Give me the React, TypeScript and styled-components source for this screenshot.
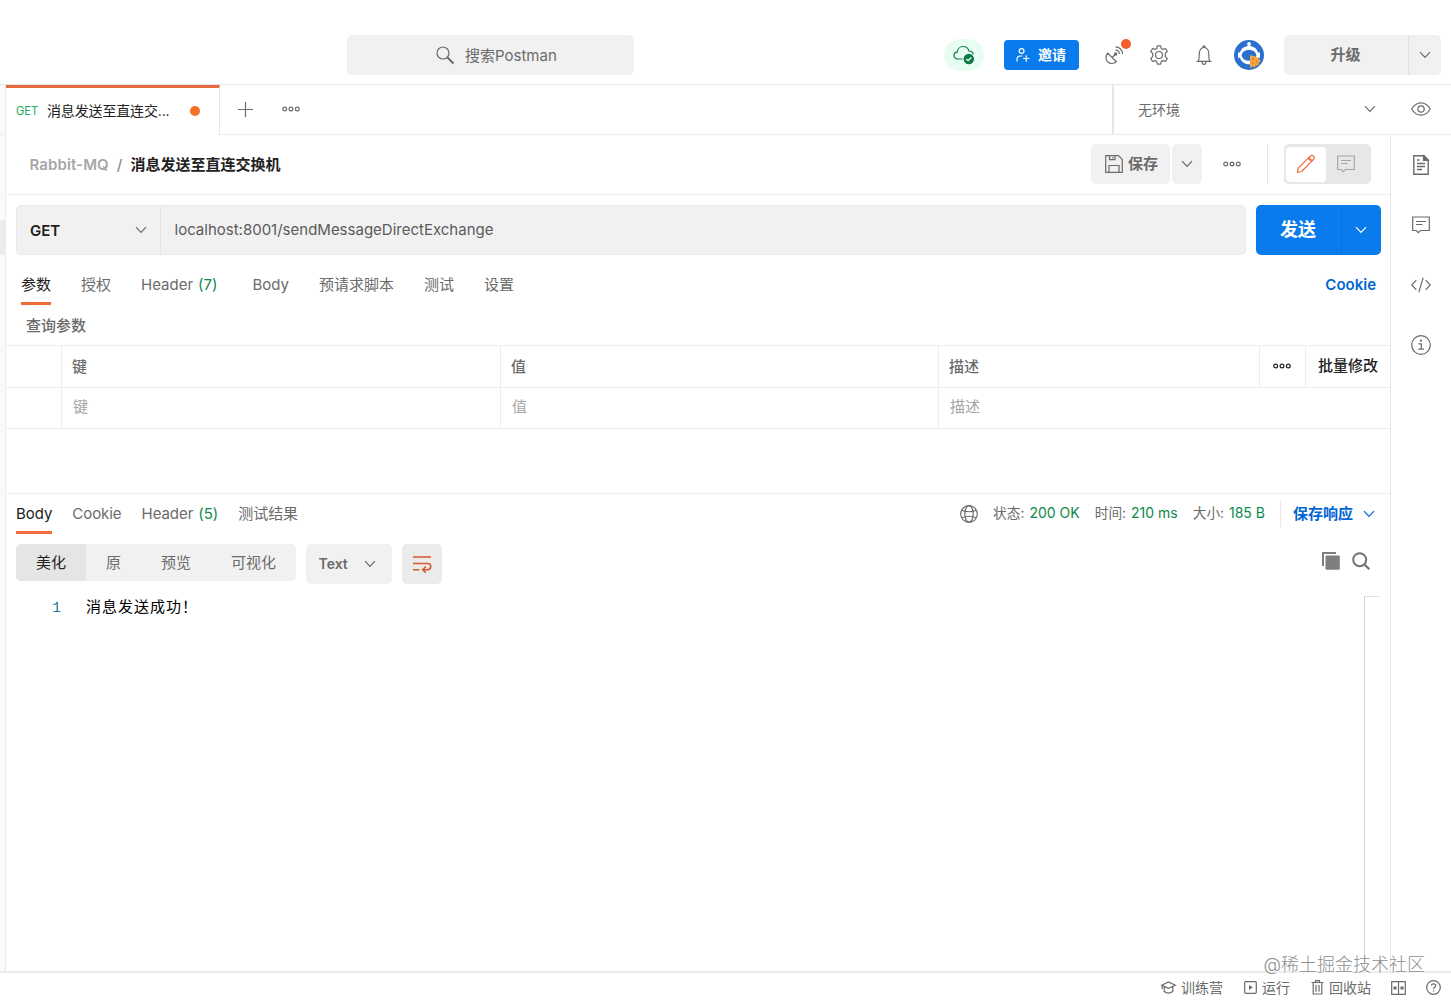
import React from "react";
import styled, { createGlobalStyle, css } from "styled-components";

const GlobalStyle = createGlobalStyle`
  * { box-sizing: border-box; }
  body {
    margin: 0;
    background: #fff;
    font-family: Inter, "Noto Sans CJK SC", sans-serif;
    font-size: 15px;
    line-height: 20px;
    color: #6b6b6b;
    overflow: hidden;
  }
`;

const line = "#ededed";
const orange = "#f26b3a";
const blue = "#097bed";
const green = "#0c8a4b";

const Page = styled.div`
  position: relative;
  width: 1451px;
  height: 1001px;
  display: flex;
  flex-direction: column;
  white-space: nowrap;
`;

const Svg = styled.svg<{ $color?: string }>`
  display: block;
  flex: none;
  fill: none;
  stroke: ${(p) => p.$color ?? "#6b6b6b"};
  stroke-width: 1.2;
  overflow: visible;
`;

/* ---------- header ---------- */
const Header = styled.header`
  flex: none;
  height: 85px;
  padding: 25px 10px 0 347px;
  display: flex;
  align-items: center;
  border-bottom: 1px solid #e6e6e6;
`;
const Search = styled.div`
  width: 287px;
  height: 40px;
  padding: 2px 0 0 89px;
  display: flex;
  align-items: center;
  gap: 10px;
  border-radius: 5px;
  background: #f1f1f1;
`;
const HeaderTools = styled.div`
  margin-left: auto;
  display: flex;
  align-items: center;
`;
const CloudPill = styled.div`
  width: 40px;
  height: 32px;
  margin-right: 20px;
  border-radius: 16px;
  background: #e8fdf1;
  display: grid;
  place-items: center;
`;
const Invite = styled.button`
  width: 75px;
  height: 30px;
  margin-right: 25px;
  padding: 0 0 0 12px;
  border: 0;
  border-radius: 4px;
  display: flex;
  align-items: center;
  gap: 8px;
  background: ${blue};
  color: #fff;
  font: 700 14px/20px Inter, "Noto Sans CJK SC", sans-serif;
`;
const Tool = styled.div<{ $gap: number }>`
  position: relative;
  width: 20px;
  height: 20px;
  margin-right: ${(p) => p.$gap}px;
  display: grid;
  place-items: center;
`;
const Notice = styled.i`
  position: absolute;
  top: -6px;
  right: -7px;
  width: 10px;
  height: 10px;
  border-radius: 50%;
  background: #f2602c;
`;
const Upgrade = styled.div`
  width: 157px;
  height: 40px;
  margin-left: 20px;
  border-radius: 5px;
  background: #f1f1f1;
  display: flex;
  font-weight: 600;
`;
const UpgradeLabel = styled.div`
  width: 125px;
  padding-right: 1px;
  display: grid;
  place-items: center;
  border-right: 1px solid #e0e0e0;
`;
const UpgradeMore = styled.div`
  flex: 1;
  display: grid;
  place-items: center;
`;

/* ---------- workspace ---------- */
const Workspace = styled.div`
  flex: 1;
  min-height: 0;
  display: flex;
`;
const Gutter = styled.div`
  width: 6px;
  border-right: 1px solid #ebebeb;
  background: #fafafa;
`;
const GutterTop = styled.div`
  height: 50px;
  border-bottom: 1px solid ${line};
`;
const GutterMark = styled.div`
  height: 35px;
  margin-top: 85px;
  background: #ececec;
`;
const Column = styled.div`
  flex: 1;
  display: flex;
  flex-direction: column;
`;
const TabBar = styled.div`
  height: 50px;
  display: flex;
`;
const RequestTab = styled.div`
  width: 214px;
  border-top: 3px solid #e5693f;
  border-right: 1px solid #e6e6e6;
  padding: 0 19px 2px 10px;
  display: flex;
  align-items: center;
  color: #212121;
  font-size: 14px;
`;
const TabMethod = styled.span`
  width: 31px;
  padding-top: 1px;
  font-size: 11.2px;
  color: #1fa963;
`;
const TabTitle = styled.span`
  letter-spacing: -0.15px;
`;
const Unsaved = styled.i`
  width: 10px;
  height: 10px;
  margin-left: auto;
  border-radius: 50%;
  background: #f47023;
`;
const TabActions = styled.div`
  flex: 1;
  padding: 0 0 1px 18px;
  display: flex;
  align-items: center;
  gap: 29px;
  border-bottom: 1px solid ${line};
`;
const Environment = styled.div`
  width: 339px;
  padding: 1px 20px 0 24px;
  display: flex;
  align-items: center;
  border-left: 2px solid #e6e6e6;
  border-bottom: 1px solid ${line};
  font-size: 14px;
`;
const EnvIcons = styled.div`
  margin-left: auto;
  padding-bottom: 3px;
  display: flex;
  align-items: center;
  gap: 35px;
`;
const Split = styled.div`
  flex: 1;
  min-height: 0;
  display: flex;
`;
const Editor = styled.main`
  width: 1384px;
  display: flex;
  flex-direction: column;
`;
const Rail = styled.aside`
  flex: 1;
  padding-top: 20px;
  border-left: 1px solid #e9e9e9;
  display: flex;
  flex-direction: column;
  align-items: center;
  gap: 40px;
`;
const RailItem = styled.div`
  width: 20px;
  height: 20px;
  display: grid;
  place-items: center;
`;

/* ---------- request title ---------- */
const TitleRow = styled.div`
  flex: none;
  height: 60px;
  padding: 0 19px 1px 23.5px;
  display: flex;
  align-items: center;
  border-bottom: 1px solid ${line};
  font-weight: 600;
`;
const Breadcrumb = styled.div`
  padding-top: 2px;
`;
const Crumb = styled.span`
  color: #a6a6a6;
  letter-spacing: 0.1px;
`;
const CrumbSlash = styled.span`
  margin: 0 8px;
  color: #8c8c8c;
  font-weight: 500;
`;
const Title = styled.span`
  color: #212121;
`;
const TitleTools = styled.div`
  margin-left: auto;
  display: flex;
  align-items: center;
`;
const SaveButton = styled.div`
  width: 79px;
  height: 40px;
  padding-left: 14px;
  display: flex;
  align-items: center;
  gap: 5px;
  border-radius: 5px;
  background: #f1f1f1;
`;
const SaveMore = styled.div`
  width: 30px;
  height: 40px;
  margin: 0 21px 0 2px;
  display: grid;
  place-items: center;
  border-radius: 5px;
  background: #f1f1f1;
`;
const VerticalRule = styled.i<{ $h: number; $l: number; $r: number }>`
  width: 1px;
  height: ${(p) => p.$h}px;
  margin: 0 ${(p) => p.$r}px 0 ${(p) => p.$l}px;
  background: #e8e8e8;
`;
const ModeSwitch = styled.div`
  width: 87px;
  height: 40px;
  padding: 3px 2px 2px;
  display: flex;
  border-radius: 5px;
  background: #e7e7e7;
`;
const Mode = styled.div<{ $on?: boolean }>`
  width: 40px;
  padding-bottom: 1px;
  display: grid;
  place-items: center;
  border-radius: 4px;
  background: ${(p) => (p.$on ? "#fff" : "transparent")};
`;

/* ---------- url row ---------- */
const UrlRow = styled.div`
  flex: none;
  height: 60px;
  padding: 10px 9px 0 10px;
  display: flex;
`;
const UrlBox = styled.div`
  width: 1230px;
  height: 50px;
  display: flex;
  border: 1px solid #e9e9e9;
  border-radius: 5px;
  background: #f1f1f1;
`;
const Method = styled.div`
  width: 144px;
  padding: 0 13px 0 13px;
  display: flex;
  align-items: center;
  justify-content: space-between;
  border-right: 1px solid #e4e4e4;
  color: #212121;
  font-size: 15px;
  font-weight: 600;
`;
const MethodName = styled.span`
  padding-top: 1px;
`;
const Url = styled.div`
  padding: 14px 0 0 13.5px;
  color: #5b5b5b;
`;
const Send = styled.div`
  width: 125px;
  height: 50px;
  margin-left: 10px;
  display: flex;
  border-radius: 5px;
  background: ${blue};
  color: #fff;
  font-size: 18px;
  font-weight: 700;
`;
const SendLabel = styled.div`
  width: 86px;
  padding-right: 1px;
  display: grid;
  place-items: center;
  border-right: 1px solid #0873df;
`;
const SendMore = styled.div`
  width: 38px;
  display: grid;
  place-items: center;
`;

/* ---------- tabs ---------- */
const RequestTabs = styled.nav`
  flex: none;
  height: 50px;
  padding: 0 14px 0 15px;
  display: flex;
  align-items: flex-start;
`;
const tabBase = css<{ $on?: boolean }>`
  padding-bottom: 7px;
  border-bottom: 3px solid ${(p) => (p.$on ? orange : "transparent")};
  color: ${(p) => (p.$on ? "#212121" : "#6b6b6b")};
`;
const RequestTabItem = styled.span<{ $on?: boolean; $gap: number }>`
  ${tabBase}
  padding-top: 20px;
  margin-right: ${(p) => p.$gap}px;
`;
const Count = styled.em`
  margin-left: 5px;
  font-style: normal;
  color: ${green};
`;
const CookieLink = styled.span`
  margin: 20px 0 0 auto;
  color: #0265d2;
  font-weight: 600;
  font-size: 15px;
`;
const SectionTitle = styled.div`
  flex: none;
  height: 40px;
  padding: 11px 0 0 20px;
  font-weight: 500;
`;

/* ---------- params table ---------- */
const Table = styled.div`
  flex: none;
  border-top: 1px solid ${line};
`;
const HeadRow = styled.div`
  height: 42px;
  display: grid;
  grid-template-columns: 56px 439px 438px 321px 46px 84px;
  border-bottom: 1px solid ${line};
  font-weight: 500;
`;
const FieldRow = styled(HeadRow)`
  height: 41px;
  grid-template-columns: 56px 439px 438px 451px;
  font-weight: 400;
  color: #a6a6a6;
`;
const Cell = styled.div<{ $pad?: number; $lift?: boolean; $last?: boolean; $dark?: boolean }>`
  padding-left: ${(p) => p.$pad ?? 0}px;
  padding-bottom: ${(p) => (p.$lift ? 2 : 0)}px;
  display: flex;
  align-items: center;
  border-right: ${(p) => (p.$last ? "0" : `1px solid ${line}`)};
  color: ${(p) => (p.$dark ? "#212121" : "inherit")};
`;

/* ---------- response ---------- */
const Response = styled.section`
  flex: 1;
  min-height: 0;
  margin-top: 64px;
  border-top: 1px solid ${line};
  display: flex;
  flex-direction: column;
`;
const ResponseHead = styled.div`
  flex: none;
  height: 50px;
  padding: 0 15px 0 10px;
  display: flex;
  align-items: flex-start;
`;
const ResponseTab = styled.span<{ $on?: boolean; $gap?: number }>`
  ${tabBase}
  padding-top: 10px;
  margin-right: ${(p) => p.$gap ?? 20}px;
  letter-spacing: -0.05px;
`;
const Stats = styled.div`
  height: 40px;
  margin-left: auto;
  display: flex;
  align-items: center;
  font-size: 13.7px;
`;
const Stat = styled.span<{ $gap: number }>`
  margin-left: ${(p) => p.$gap}px;
  padding-bottom: 2px;
`;
const StatValue = styled.b`
  margin-left: 5px;
  font-size: 14px;
  font-weight: 400;
  color: ${green};
`;
const SaveResponse = styled.span`
  margin-right: 10px;
  color: #0265d2;
  font-size: 15px;
  font-weight: 700;
`;
const Toolbar = styled.div`
  flex: none;
  height: 52px;
  padding: 0 20px 0 10px;
  display: flex;
  align-items: flex-start;
`;
const Segments = styled.div`
  width: 280px;
  height: 37px;
  display: flex;
  overflow: hidden;
  border-radius: 5px;
  background: #f1f1f1;
`;
const Segment = styled.div<{ $w: number; $on?: boolean }>`
  width: ${(p) => p.$w}px;
  display: grid;
  place-items: center;
  background: ${(p) => (p.$on ? "#e5e5e5" : "transparent")};
  color: ${(p) => (p.$on ? "#212121" : "#6b6b6b")};
`;
const Format = styled.div`
  width: 86px;
  height: 40px;
  margin: 0 10px;
  padding: 0 16px 1px 12.5px;
  display: flex;
  align-items: center;
  justify-content: space-between;
  border-radius: 5px;
  background: #f1f1f1;
  font-size: 14px;
  font-weight: 600;
`;
const Wrap = styled.div`
  width: 40px;
  height: 40px;
  display: grid;
  place-items: center;
  border-radius: 5px;
  background: #ebebeb;
`;
const ToolbarIcons = styled.div`
  margin: 8px 0 0 auto;
  display: flex;
  gap: 12px;
`;
const Code = styled.div`
  flex: 1;
  display: flex;
  line-height: 20px;
`;
const LineNumber = styled.span`
  width: 55px;
  padding-top: 2px;
  text-align: right;
  font-family: "Liberation Mono", monospace;
  font-size: 14.5px;
  color: #237893;
`;
const CodeText = styled.span`
  margin-left: 25px;
  padding-top: 1px;
  font-size: 15px;
  letter-spacing: 1px;
  color: #000;
`;
const Ruler = styled.div`
  width: 16px;
  margin: 0 10px 0 auto;
  border-top: 1px solid #e4e4e4;
  border-left: 1px solid #d0d0d0;
`;

/* ---------- footer ---------- */
const Footer = styled.footer`
  flex: none;
  height: 30px;
  padding: 1px 10px 0 0;
  display: flex;
  align-items: center;
  justify-content: flex-end;
  border-top: 2px solid #ececec;
  font-size: 14px;
`;
const FooterItem = styled.span<{ $gap?: number }>`
  margin-right: ${(p) => p.$gap ?? 20}px;
  display: flex;
  align-items: center;
  gap: 5px;
`;
const Watermark = styled.div`
  position: absolute;
  right: 26px;
  bottom: 24px;
  color: #8f8f8f;
  font-size: 18px;
  font-weight: 300;
  line-height: 24px;
  text-shadow: 1px 1px 1px #fff;
`;

/* ---------- icons ---------- */
const Chevron = ({ color }: { color?: string }) => (
  <Svg $color={color} width="12" height="8" viewBox="0 0 12 8">
    <path d="M1 1.2 6 6.4 11 1.2" />
  </Svg>
);
const Dots = ({ color }: { color?: string }) => (
  <Svg $color={color} width="18" height="6" viewBox="0 0 18 6">
    <circle cx="2.7" cy="3" r="1.9" />
    <circle cx="9" cy="3" r="1.9" />
    <circle cx="15.3" cy="3" r="1.9" />
  </Svg>
);
const SearchIcon = () => (
  <Svg width="19" height="19" viewBox="0 0 19 19">
    <circle cx="7" cy="7" r="6" />
    <path d="M11.2 11.2 17.5 17.5" strokeWidth="2" />
  </Svg>
);
const CloudIcon = () => (
  <Svg $color="#0c7a45" width="22" height="20" viewBox="0 0 22 20">
    <path d="M9.5 14H4.8C2.7 14 1 12.500 1 10.500c0-1.900 1.400-3.300 3.200-3.400.3-3.200 2.800-5.600 5.900-5.600 2.800 0 5.100 1.900 5.800 4.500 2.300.1 4.100 1.600 4.300 3.500" />
    <circle cx="15.800" cy="14" r="5.200" fill="#0c7a45" stroke="none" />
    <path d="m13.400 14 1.700 1.700 3.100-3.200" stroke="#fff" />
  </Svg>
);
const InviteIcon = () => (
  <Svg $color="#fff" width="14" height="14" viewBox="0 0 14 14">
    <circle cx="5.600" cy="3" r="2.400" />
    <path d="M1 13.500V11.500C1 9.300 2.600 8 4.600 8h1.800M10.200 7.300v6.400M7 10.500h6.400" />
  </Svg>
);
const SatelliteIcon = () => (
  <Svg width="20" height="20" viewBox="0 0 20 20">
    <path d="M3.800 8.200C1.400 10.600 1.400 14.400 3.600 16.700c2.400 2.300 6.200 2.400 8.800.1ZM8.200 12.500 11.200 9.500" />
    <circle cx="11.600" cy="9" r="1.700" fill="#6b6b6b" stroke="none" />
    <path d="M11.500 5.200c2.200 0 3.800 1.700 3.800 3.900M11.500 1.900c4 0 7.100 3.200 7.100 7.200" />
  </Svg>
);
const GearIcon = () => (
  <Svg width="20" height="20" viewBox="0 0 20 20">
    <path
      strokeLinejoin="round"
      d="M8.300.8h3.400l.6 2.700 1.600.9 2.600-.9 1.800 3-2 1.900v3.200l2 1.900-1.800 3-2.600-.9-1.600.9-.6 2.700H8.300l-.6-2.700-1.600-.9-2.600.9-1.800-3 2-1.900V8.400l-2-1.900 1.800-3 2.600.9 1.600-.9Z"
    />
    <circle cx="10" cy="10" r="3.500" />
  </Svg>
);
const BellIcon = () => (
  <Svg width="18" height="20" viewBox="0 0 18 20">
    <path d="M1.500 16.300h15M3.300 16.200c1-2 .9-4.200.9-6.700C4.200 5.500 6 2.500 9 2.500s4.800 3 4.800 7c0 2.500-.1 4.700.9 6.700M7.800 2.500C7.800.3 10.200.3 10.200 2.500M7 16.500c0 3.700 4 3.700 4 0" />
  </Svg>
);
const Avatar = () => (
  <Svg width="30" height="30" viewBox="0 0 30 30">
    <circle cx="15" cy="15" r="15" fill="#2b70cf" stroke="none" />
    <path d="M4 12.500h2C7.200 8.300 10.600 6 15 6s7.800 2.300 9 6.500h2v5.300h-2c-1.200 4-4.600 6.500-9 6.500s-7.800-2.500-9-6.500H4Z" fill="#fff" stroke="none" />
    <ellipse cx="15" cy="15.300" rx="7.300" ry="5.500" fill="#2b70cf" stroke="none" />
    <circle cx="15" cy="4" r="1.900" fill="#fff" stroke="none" />
    <path d="M16 15.600c4.300-.6 8 1.600 10.800 5.500l-2.300 2.200.3 2-3.300.2-.7 2.500-1.800-1.700-3 1.900Z" fill="#f4a63b" stroke="none" />
    <g fill="#d9702c" stroke="none">
      <circle cx="19" cy="18.800" r="1" />
      <circle cx="22.600" cy="21.500" r="1" />
      <circle cx="18.600" cy="23" r=".8" />
    </g>
  </Svg>
);
const EyeIcon = () => (
  <Svg width="20" height="14" viewBox="0 0 20 14">
    <path d="M.7 7C3 3 6.200.8 10 .8S17 3 19.300 7C17 11 13.800 13.200 10 13.200S3 11 .7 7Z" />
    <circle cx="10" cy="7" r="3.200" />
  </Svg>
);
const SaveIcon = () => (
  <Svg width="18" height="18" viewBox="0 0 18 18">
    <path d="M.7.700H13.500L17.300 4.500V17.300H.7ZM4.500.700V4.700H10V.700M4 17.300V10.500H14V17.300M7.800 2v1.500" />
  </Svg>
);
const PencilIcon = () => (
  <Svg $color="#f0693c" width="20" height="20" viewBox="0 0 20 20">
    <path strokeLinejoin="round" d="M1.500 18.500 2.200 14.200 14.300 2.100c1-1 2.300-1 3.300 0s1 2.300 0 3.300L5.600 17.500ZM12.200 4.200l3.400 3.200" />
    <path d="M13.500 3c0 2 1.300 3.500 3.300 3.400" />
  </Svg>
);
const CommentIcon = ({ color }: { color?: string }) => (
  <Svg $color={color} width="18" height="18" viewBox="0 0 18 18">
    <path d="M.7 1H17.300V14.500H8.500L6.300 16.700 4.200 14.500H.7ZM4 5.500H14M4 8.500H10.500" />
  </Svg>
);
const DocIcon = () => (
  <Svg width="16" height="20" viewBox="0 0 16 20">
    <path d="M.8.800H11L15.200 5V19.200H.8ZM4 5H6.500M4 8.500H12M4 11.500H12M4 14.500H9" strokeWidth="1.400" />
    <path d="M10.500.800V5.500H15.200Z" fill="#6b6b6b" />
  </Svg>
);
const CodeIcon = () => (
  <Svg width="20" height="16" viewBox="0 0 20 16">
    <path d="M5.300 3.200.8 8l4.500 4.800M14.700 3.200 19.200 8l-4.500 4.800M12.200.700 7.800 15.300" />
  </Svg>
);
const InfoIcon = () => (
  <Svg width="20" height="20" viewBox="0 0 20 20">
    <circle cx="10" cy="10" r="9.300" />
    <path d="M7.500 8.800H10.300V14M7.300 14.200H13" />
    <circle cx="10" cy="5.700" r="1.100" fill="#6b6b6b" stroke="none" />
  </Svg>
);
const GlobeIcon = () => (
  <Svg width="18" height="18" viewBox="0 0 18 18">
    <circle cx="9" cy="9" r="8.300" />
    <ellipse cx="9" cy="9" rx="4.200" ry="8.300" />
    <path d="M1.800 5.300C6 7 12 7 16.200 5.300M1.800 12.700C6 11 12 11 16.200 12.700" />
  </Svg>
);
const WrapIcon = () => (
  <Svg $color="#d65a2b" width="20" height="18" viewBox="0 0 20 18">
    <path strokeWidth="1.600" d="M1 2H19M1 8.500H15.500C19.800 8.500 19.800 14.700 15.500 14.700H11M1 14.700H7.500M13.800 11.500 10.700 14.700l3.100 3" />
  </Svg>
);
const CopyIcon = () => (
  <Svg $color="#7f7f7f" width="18" height="18" viewBox="0 0 18 18">
    <path d="M1 14V1H14" strokeWidth="2" />
    <rect x="3.500" y="3.500" width="14.300" height="14.300" rx="1" fill="#7f7f7f" stroke="none" />
  </Svg>
);
const FindIcon = () => (
  <Svg $color="#737373" width="18" height="18" viewBox="0 0 18 18">
    <circle cx="7.700" cy="7.700" r="6.500" strokeWidth="2" />
    <path d="m12.300 12.300 5 5" strokeWidth="2.200" />
  </Svg>
);
const CapIcon = () => (
  <Svg width="15" height="13" viewBox="0 0 15 13">
    <path d="M.7 4.200 7.500 1l6.800 3.200-6.800 3.200ZM3.200 5.600v5c2.500 1.700 6 1.700 8.600 0v-5M1.200 4.500V8" />
  </Svg>
);
const RunIcon = () => (
  <Svg width="13" height="13" viewBox="0 0 13 13">
    <rect x=".7" y=".7" width="11.600" height="11.600" rx="1" />
    <path d="m5 4 3.800 2.500L5 9Z" fill="#6b6b6b" stroke="none" />
  </Svg>
);
const TrashIcon = () => (
  <Svg width="13" height="15" viewBox="0 0 13 15">
    <path d="M.5 2.500h12M4.500 2.300V.700h4v1.600M2.200 2.500V14h8.600V2.500M5 5v6.800M8 5v6.800" />
  </Svg>
);
const PanesIcon = () => (
  <Svg width="15" height="14" viewBox="0 0 15 14">
    <path d="M.7.700H14.300V13.300H.7ZM7.500.700V13.300" />
    <path d="M2.500 5.500h3v3h-3zM9.500 5.500h3v3h-3z" fill="#6b6b6b" stroke="none" />
  </Svg>
);
const HelpIcon = () => (
  <Svg width="15" height="15" viewBox="0 0 15 15">
    <circle cx="7.500" cy="7.500" r="6.800" />
    <path d="M5.500 5.800c0-2.700 4.200-2.500 4.200 0 0 1.500-2.200 1.500-2.200 3.200M7.500 10.300v1.300" />
  </Svg>
);

export default function App() {
  return (
    <Page>
      <GlobalStyle />
      <Header>
        <Search>
          <SearchIcon />
          <span>搜索Postman</span>
        </Search>
        <HeaderTools>
          <CloudPill><CloudIcon /></CloudPill>
          <Invite><InviteIcon />邀请</Invite>
          <Tool $gap={25}><SatelliteIcon /><Notice /></Tool>
          <Tool $gap={25}><GearIcon /></Tool>
          <Tool $gap={20}><BellIcon /></Tool>
          <Avatar />
          <Upgrade>
            <UpgradeLabel>升级</UpgradeLabel>
            <UpgradeMore><Chevron /></UpgradeMore>
          </Upgrade>
        </HeaderTools>
      </Header>

      <Workspace>
        <Gutter>
          <GutterTop />
          <GutterMark />
        </Gutter>
        <Column>
          <TabBar>
            <RequestTab>
              <TabMethod>GET</TabMethod>
              <TabTitle>消息发送至直连交...</TabTitle>
              <Unsaved />
            </RequestTab>
            <TabActions>
              <Svg width="15" height="15" viewBox="0 0 15 15"><path d="M7.500 0v15M0 7.500h15" /></Svg>
              <Dots />
            </TabActions>
            <Environment>
              无环境
              <EnvIcons><Chevron /><EyeIcon /></EnvIcons>
            </Environment>
          </TabBar>

          <Split>
            <Editor>
              <TitleRow>
                <Breadcrumb>
                  <Crumb>Rabbit-MQ</Crumb>
                  <CrumbSlash>/</CrumbSlash>
                  <Title>消息发送至直连交换机</Title>
                </Breadcrumb>
                <TitleTools>
                  <SaveButton><SaveIcon />保存</SaveButton>
                  <SaveMore><Chevron /></SaveMore>
                  <Dots />
                  <VerticalRule $h={40} $l={26} $r={16} />
                  <ModeSwitch>
                    <Mode $on><PencilIcon /></Mode>
                    <Mode><CommentIcon color="#a6a6a6" /></Mode>
                  </ModeSwitch>
                </TitleTools>
              </TitleRow>

              <UrlRow>
                <UrlBox>
                  <Method><MethodName>GET</MethodName><Chevron /></Method>
                  <Url>localhost:8001/sendMessageDirectExchange</Url>
                </UrlBox>
                <Send>
                  <SendLabel>发送</SendLabel>
                  <SendMore><Chevron color="#fff" /></SendMore>
                </Send>
              </UrlRow>

              <RequestTabs>
                <RequestTabItem $on $gap={30}>参数</RequestTabItem>
                <RequestTabItem $gap={30}>授权</RequestTabItem>
                <RequestTabItem $gap={35}>Header<Count>(7)</Count></RequestTabItem>
                <RequestTabItem $gap={30}>Body</RequestTabItem>
                <RequestTabItem $gap={30}>预请求脚本</RequestTabItem>
                <RequestTabItem $gap={30}>测试</RequestTabItem>
                <RequestTabItem $gap={0}>设置</RequestTabItem>
                <CookieLink>Cookie</CookieLink>
              </RequestTabs>
              <SectionTitle>查询参数</SectionTitle>

              <Table>
                <HeadRow>
                  <Cell />
                  <Cell $pad={10}>键</Cell>
                  <Cell $pad={10}>值</Cell>
                  <Cell $pad={10}>描述</Cell>
                  <Cell $pad={13} $lift><Dots color="#212121" /></Cell>
                  <Cell $pad={12} $lift $last $dark>批量修改</Cell>
                </HeadRow>
                <FieldRow>
                  <Cell />
                  <Cell $pad={11} $lift>键</Cell>
                  <Cell $pad={11} $lift>值</Cell>
                  <Cell $pad={11} $lift $last>描述</Cell>
                </FieldRow>
              </Table>

              <Response>
                <ResponseHead>
                  <ResponseTab $on>Body</ResponseTab>
                  <ResponseTab>Cookie</ResponseTab>
                  <ResponseTab>Header<Count>(5)</Count></ResponseTab>
                  <ResponseTab $gap={0}>测试结果</ResponseTab>
                  <Stats>
                    <GlobeIcon />
                    <Stat $gap={15}>状态:<StatValue>200 OK</StatValue></Stat>
                    <Stat $gap={15}>时间:<StatValue>210 ms</StatValue></Stat>
                    <Stat $gap={15}>大小:<StatValue>185 B</StatValue></Stat>
                    <VerticalRule $h={26} $l={15} $r={12} />
                    <SaveResponse>保存响应</SaveResponse>
                    <Chevron color="#0265d2" />
                  </Stats>
                </ResponseHead>
                <Toolbar>
                  <Segments>
                    <Segment $w={70} $on>美化</Segment>
                    <Segment $w={55}>原</Segment>
                    <Segment $w={70}>预览</Segment>
                    <Segment $w={85}>可视化</Segment>
                  </Segments>
                  <Format>Text<Chevron /></Format>
                  <Wrap><WrapIcon /></Wrap>
                  <ToolbarIcons><CopyIcon /><FindIcon /></ToolbarIcons>
                </Toolbar>
                <Code>
                  <LineNumber>1</LineNumber>
                  <CodeText>消息发送成功！</CodeText>
                  <Ruler />
                </Code>
              </Response>
            </Editor>
            <Rail>
              <RailItem><DocIcon /></RailItem>
              <RailItem><CommentIcon /></RailItem>
              <RailItem><CodeIcon /></RailItem>
              <RailItem><InfoIcon /></RailItem>
            </Rail>
          </Split>
        </Column>
      </Workspace>

      <Footer>
        <FooterItem $gap={21}><CapIcon />训练营</FooterItem>
        <FooterItem $gap={21}><RunIcon />运行</FooterItem>
        <FooterItem><TrashIcon />回收站</FooterItem>
        <FooterItem><PanesIcon /></FooterItem>
        <FooterItem $gap={0}><HelpIcon /></FooterItem>
      </Footer>
      <Watermark>@稀土掘金技术社区</Watermark>
    </Page>
  );
}
